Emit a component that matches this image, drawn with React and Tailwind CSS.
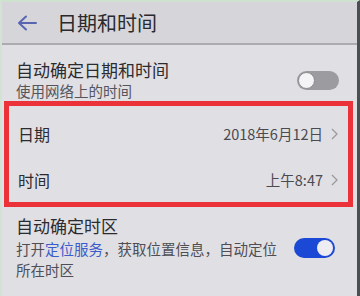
import React from "react";

const font = { fontFamily: '"Noto Sans CJK SC", "Noto Sans", sans-serif' };

function Chevron() {
  return (
    <svg width="7" height="12" viewBox="0 0 7 12" className="ml-[8px]">
      <path d="M1 1 L6 6 L1 11" fill="none" stroke="#9a9a9e" strokeWidth="1.3" />
    </svg>
  );
}

export default function App() {
  return (
    <div
      className="w-[360px] h-[296px] overflow-hidden bg-[#e0dfe3] text-[#2b2b30] border-r-[3px] border-r-[#4b4e52] border-l-[2px] border-l-[#d3e3d3] border-t-[2px] border-t-[#cfe2cf] flex flex-col"
      style={font}
    >
      {/* header */}
      <div className="h-[43px] shrink-0 bg-[#d6d6da] flex items-center border-b-[2px] border-b-[#acacb0]">
        <svg width="20" height="16" viewBox="0 0 20 16" className="ml-[15px]">
          <path d="M9 1.5 L2 8 L9 14.5 M2 8 H19" fill="none" stroke="#5866b2" strokeWidth="2" strokeLinecap="round" strokeLinejoin="round" />
        </svg>
        <span className="ml-[20px] text-[20px] leading-none text-[#2a2a2e]">日期和时间</span>
      </div>

      {/* auto date */}
      <div className="flex items-center pl-[14px] pr-[18px] pt-[14px]">
        <div className="flex-1 flex flex-col">
          <span className="text-[17px] leading-[22px]">自动确定日期和时间</span>
          <span className="text-[14.5px] leading-[20px] text-[#55555b]">使用网络上的时间</span>
        </div>
        <div className="w-[42px] h-[19px] rounded-full bg-[#9c9ca0] flex items-center pl-[1px]">
          <div className="w-[17px] h-[17px] rounded-full bg-[#f4f4f6] border border-[#8a8a8e]" />
        </div>
      </div>

      {/* red box */}
      <div className="ml-[2px] mr-[4px] border-[5px] border-[#ea3238] pt-[4px] shrink-0">
        <div className="h-[47px] flex items-center pl-[9px] pr-[10px]">
          <span className="flex-1 text-[16px]">日期</span>
          <span className="text-[14.5px] text-[#4a4a50]">2018年6月12日</span>
          <Chevron />
        </div>
        <div className="h-[45px] flex items-center pl-[9px] pr-[10px]">
          <span className="flex-1 text-[16px]">时间</span>
          <span className="text-[14.5px] text-[#4a4a50]">上午8:47</span>
          <Chevron />
        </div>
      </div>

      {/* auto timezone */}
      <div className="flex items-center pl-[14px] pr-[22px] pt-[8px]">
        <div className="flex-1 flex flex-col">
          <span className="text-[17px] leading-[22px]">自动确定时区</span>
          <span className="text-[14.5px] leading-[21px] text-[#4e4e54] mt-[1px]">
            打开<span className="text-[#3a5ccc]">定位服务</span>，获取位置信息，自动定位
            <br />
            所在时区
          </span>
        </div>
        <div className="w-[41px] h-[20px] rounded-full bg-[#1b48d4] flex items-center justify-end pr-[2px]">
          <div className="w-[16px] h-[16px] rounded-full bg-[#eeeef2]" />
        </div>
      </div>
    </div>
  );
}
